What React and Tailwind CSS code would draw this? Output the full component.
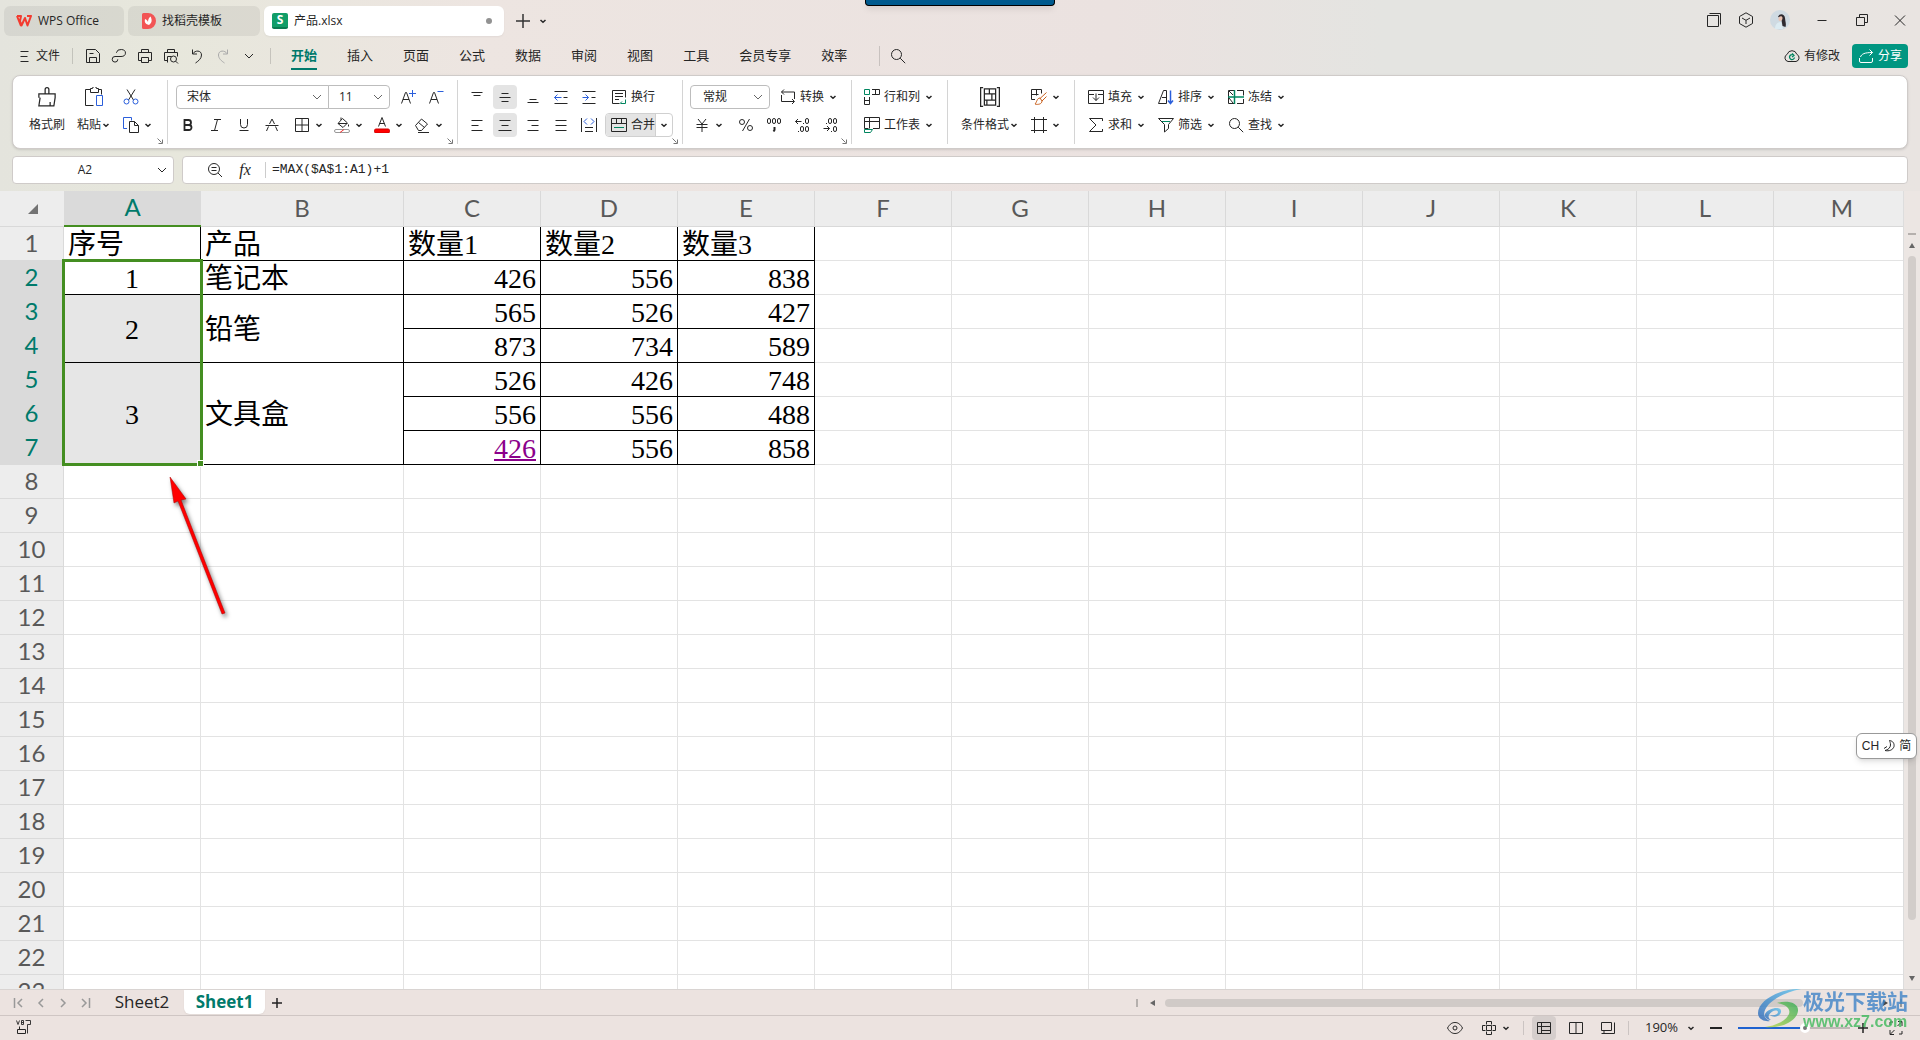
import React, { useState } from "react";

const BLUE = "#2b5fdb";
const GREEN = "#00855f";
const ORANGE = "#c8601e";

const columns = ["A", "B", "C", "D", "E", "F", "G", "H", "I", "J", "K", "L", "M"];

const menuTabs = ["开始", "插入", "页面", "公式", "数据", "审阅", "视图", "工具", "会员专享", "效率"];

// Each row only lists the cells that start in it, span = merged rows
const sheetRows = [
  [
    { col: "A", text: "序号" },
    { col: "B", text: "产品" },
    { col: "C", text: "数量1" },
    { col: "D", text: "数量2" },
    { col: "E", text: "数量3" },
  ],
  [
    { col: "A", text: "1", center: true },
    { col: "B", text: "笔记本" },
    { col: "C", text: "426", num: true },
    { col: "D", text: "556", num: true },
    { col: "E", text: "838", num: true },
  ],
  [
    { col: "A", text: "2", center: true, span: 2, shaded: true },
    { col: "B", text: "铅笔", span: 2 },
    { col: "C", text: "565", num: true },
    { col: "D", text: "526", num: true },
    { col: "E", text: "427", num: true },
  ],
  [
    { col: "C", text: "873", num: true },
    { col: "D", text: "734", num: true },
    { col: "E", text: "589", num: true },
  ],
  [
    { col: "A", text: "3", center: true, span: 3, shaded: true },
    { col: "B", text: "文具盒", span: 3 },
    { col: "C", text: "526", num: true },
    { col: "D", text: "426", num: true },
    { col: "E", text: "748", num: true },
  ],
  [
    { col: "C", text: "556", num: true },
    { col: "D", text: "556", num: true },
    { col: "E", text: "488", num: true },
  ],
  [
    { col: "C", text: "426", num: true, link: true },
    { col: "D", text: "556", num: true },
    { col: "E", text: "858", num: true },
  ],
];

const icons = {
  menu: <path d="M4.5 3.5h8M4.5 8.5h7M4.5 13.5h8" />,
  save: <path d="M1.5 1.5h9l4 4v9h-13zM4.5 14.5v-5h7v5M4.5 5.5h4" />,
  link: <path d="M5.5 5V4.5a4.5 3.5 0 1 1 4.500 4H4a2.800 2.800 0 1 0 2.800 2.800" />,
  print: <path d="M4.5 4.5v-3h7v3M4 12.5H1.5v-8h13v8H12M4.5 9.5h7v5h-7z" />,
  preview: (
    <>
      <path d="M4.5 4.5v-3h7v3M4 12.5H1.5v-8h13v4M4.5 14.5v-6h4" />
      <circle cx="10.5" cy="11" r="3" />
      <path d="M12.7 13.2l2.300 2.300" />
    </>
  ),
  undo: <path d="M3.5 1.5v4.5h4.5M3.8 5.8C6 2 12.5 2 12.5 7c0 3.500-3 6-6 8" />,
  redo: <path d="M12.5 1.5v4.5H8M12.2 5.8C10 2 3.5 2 3.5 7c0 3.500 3 6 6 8" />,
  search: (
    <>
      <circle cx="6.5" cy="6.5" r="5" />
      <path d="M10.2 10.2l5 5" />
    </>
  ),
  brush: <path d="M1.5 5.5h13M2.5 8.5l-1 6.500h12l1-6.500M10.5 15v-3M1.5 8.500v-3h5V2a1.500 1.500 0 0 1 3 0v3.500h5v3" />,
  cut: (
    <>
      <path d="M4 .5l6.500 10.500M12 .5L5.500 11" />
      <g stroke={BLUE}>
        <circle cx="3.5" cy="12.5" r="2.5" />
        <circle cx="12.5" cy="12.5" r="2.5" />
      </g>
    </>
  ),
  copy: (
    <>
      <path stroke={BLUE} d="M4 11.5H.5v-11h8v3" />
      <path d="M6.5 4.5h5l4 4v7h-9zM11.5 4.5v4h4" />
    </>
  ),
  border: <path d="M1.5 1.5h13v13h-13zM8 1.5v13M1.5 8h13" />,
  fill: (
    <>
      <path d="M8.5 1.5l5 4.500-4.500 4.500-5-4zM7 3V.5M4 6.5h9M14.5 7.5v2" />
      <rect x=".5" y="12.5" width="15" height="3" rx="1.5" stroke="#999" />
      <path stroke="#e33" d="M6 15.5l4-3" />
    </>
  ),
  fontColor: (
    <>
      <path d="M4.5 9.5L8 .5l3.500 9M5.5 6.5h5" />
      <rect x=".5" y="12" width="15" height="4" rx="1.5" fill="#f00" stroke="#c00" />
    </>
  ),
  eraser: <path d="M1.5 8.5l6-6.500 6 5-6 6.500h-3zM4.5 5.5l6 5M4 15.5h11" />,
  bold: <path strokeWidth="1.8" d="M4.5 3h4a2.500 2.500 0 0 1 0 5h-4zM4.5 8h4.500a2.500 2.500 0 0 1 0 5h-4.500z" />,
  italic: <path d="M6 2.5h7M3 13.5h7M9.5 2.5l-3 11" />,
  underline: <path d="M4.5 2v5.500a3.500 3.500 0 0 0 7 0V2M3.5 13.5h9" />,
  strike: <path d="M1.5 8.5h13M5.5 7L8 2l2.500 5M4.5 9.5L2.5 14M11.5 9.5l2 4.500" />,
  fontUp: (
    <>
      <path d="M1.5 14.5l4-11h1l4 11M3 10.5h6" />
      <path stroke={BLUE} d="M12.5 1v7M9 4.5h7" />
    </>
  ),
  fontDown: (
    <>
      <path d="M1.5 14.5l4-11h1l4 11M3 10.5h6" />
      <path stroke={BLUE} d="M9.5 2.5h6" />
    </>
  ),
  top: <path d="M2.5 3.5h11M4.5 6.5h7" />,
  middle: <path d="M4.5 4.5h7M2.5 8.5h11M4.5 12.5h7" />,
  bottom: <path d="M4.5 10.5h7M2.5 13.5h11" />,
  outdent: (
    <>
      <path d="M1.5 2.5h13M10.5 8.5h4M1.5 14.5h13" />
      <path stroke={BLUE} d="M1.5 8.5h7M4.5 5.5l-3 3 3 3" />
    </>
  ),
  indent: (
    <>
      <path d="M1.5 2.5h13M10.5 8.5h4M1.5 14.5h13" />
      <path stroke={BLUE} d="M1.5 8.5h6M4.5 5.5l3 3-3 3" />
    </>
  ),
  wrap: (
    <>
      <path d="M8.5 14.5h-7v-13h13v7M4 4.5h8M4 7.5h8M4 10.5h4" />
      <path stroke={GREEN} d="M14.5 10.5v4h-5M11 12.5l-2 2" />
    </>
  ),
  left: <path d="M2.5 3.5h11M2.5 8.5h7M2.5 13.5h11" />,
  center: <path d="M2.5 3.5h11M4.5 8.5h7M1.5 13.5h13" />,
  right: <path d="M2.5 3.5h11M6.5 8.5h7M2.5 13.5h11" />,
  justify: <path d="M2.5 3.5h11M2.5 8.5h11M2.5 13.5h11" />,
  distribute: (
    <>
      <path d="M.5 1v14M15.5 1v14M4 10.5h8M4 14.5h8" />
      <path stroke={BLUE} d="M6 1.5l-3 3 3 3M10 1.5l3 3-3 3" />
    </>
  ),
  merge: (
    <>
      <path d="M.5 1.5h15v13H.5zM.5 6.5h15M5.5 1.5v5M10.5 1.5v5" />
      <path stroke={GREEN} d="M3 10.5h10" />
    </>
  ),
  convert: <path d="M4 .5L1.5 3 4 5.500M1.500 3h13v7M12 10l2.500 2.500L12 15M14 12.5H1.500V6" />,
  yen: <path d="M4 2l4 5 4-5M2.5 7.5h11M2.5 10.5h11M8 7.5V15" />,
  percent: (
    <>
      <circle cx="4" cy="5" r="2.5" />
      <circle cx="12" cy="11" r="2.5" />
      <path d="M11.5 2l-7 12" />
    </>
  ),
  thousands: (
    <>
      <rect x="1.5" y="1.5" width="3" height="5" rx="1.5" />
      <rect x="6.5" y="1.5" width="3" height="5" rx="1.5" />
      <rect x="11.5" y="1.5" width="3" height="5" rx="1.5" />
      <path strokeWidth="2" d="M8.5 10v3l-1 1.500" />
    </>
  ),
  moreDecimals: (
    <>
      <path d="M1.5 4.5h6M4 2L1.5 4.5 4 7M9 6.5h1" />
      <rect x="11.5" y="1.5" width="3" height="5" rx="1.5" />
      <rect x="6.5" y="9.5" width="3" height="5" rx="1.5" />
      <rect x="11.5" y="9.5" width="3" height="5" rx="1.5" />
      <path d="M4 14.5h1" />
    </>
  ),
  lessDecimals: (
    <>
      <path d="M1.5 11.5h6M5 9l2.500 2.500L5 14M9 14.5h1M4 6.5h1" />
      <rect x="6.5" y="1.5" width="3" height="5" rx="1.5" />
      <rect x="11.5" y="1.5" width="3" height="5" rx="1.5" />
      <rect x="11.5" y="9.5" width="3" height="5" rx="1.5" />
    </>
  ),
  rowsCols: (
    <>
      <path stroke={GREEN} d="M.5.5h5v5h-5z" />
      <path d="M8 .5h7.500v5H8M11.5.5v5M.5 8v7.500h5V8M.5 11.5h5" />
    </>
  ),
  worksheet: (
    <>
      <path d="M9 11.5h6.500V.5H.5v11h4M.5 4.5h15M5.5.5v11" />
      <path stroke={GREEN} d="M.5 12.5h8l-2 3h-6z" />
    </>
  ),
  condFormat: <path d="M2.500.5h-2v15h2M13.5.5h2v15h-2M3.500 1.500h9v13h-9zM3.500 5.500h9M3.500 10.500h9M7.500 1.500v4M9.500 5.500v5M5.500 10.500v4" />,
  tableStyle: (
    <>
      <path d="M4 10.5H.5V.5h10v4M.5 5.5h7M5.5.5v6" />
      <path stroke={ORANGE} d="M15.5 3.5L9 9.5M15.5 7.5L11 12M9 9c-3 0-3 4-5 6 3 1 7 0 7-3z" />
    </>
  ),
  cells: <path d="M3.5 0v16M12.5 0v16M0 2.5h16M0 13.5h16" />,
  fillDown: <path d="M6 5.5H.5v-4h15v4H10M.5 5.5v9h15v-9M8 4.5v7M5 8.5l3 3 3-3" />,
  sort: (
    <>
      <path d="M.5 14.5h8v-13h-3zM4 8.5h4" />
      <path stroke={BLUE} strokeWidth="1.5" d="M12.5 1.5v13M10 11.5l2.500 3 2.500-3" />
    </>
  ),
  freeze: (
    <>
      <path d="M6 1.5H.5v13H6M9 1.5h6.500v5M15.5 10v4.500H9M1 2l4 4M1 9l4 5" />
      <path stroke={GREEN} strokeWidth="1.5" d="M6.5 1v14M0 8h16" />
    </>
  ),
  sum: <path d="M14.5 4V1.5h-13L8 8l-6.500 6.500h13V12" />,
  filter: (
    <>
      <path d="M.5 1.5h15l-5 6v4l-4 3.500V7.500z" />
      <path stroke={GREEN} d="M4 4.5h8" />
    </>
  ),
  zoomOut: (
    <>
      <circle cx="7" cy="7" r="5.5" />
      <path d="M4.5 5.5h5M4.5 8.5h5M11 11l4 4" />
    </>
  ),
  windows: <path d="M1.5 3.5h11v11h-11zM3.5 1.5h11v11" />,
  cube: <path d="M8 .8l6.500 3.700v7L8 15.200l-6.500-3.700v-7zM4 6l4 2.300L12 6M8 8.300V12" />,
  minimize: <path d="M3.5 8.5h9" />,
  restore: <path d="M2.5 5.5h8v8h-8zM5.5 5.5v-3h8v8h-3" />,
  close: <path d="M3 3.5l10 10M13 3.5l-10 10" />,
  cloud: (
    <>
      <path d="M4 13.5a3.800 3.800 0 0 1-.8-7.200 5 5 0 0 1 9.600 0 3.800 3.800 0 0 1-.8 7.200z" />
      <path stroke={GREEN} strokeWidth="1.3" d="M10 7.5a2.500 2.500 0 1 0 .5 2M8 5.500l2 2-2 1.500" />
    </>
  ),
  share: <path d="M1.5 10v3a1.500 1.500 0 0 0 1.500 1.500h10a1.500 1.500 0 0 0 1.500-1.500v-3M2.5 9c1-3 4-4.500 12-4.500M11.5 1.5l3 3-3 3" />,
  macro: (
    <>
      <path strokeWidth=".9" d="M.5.5l1.500 4 1.500-4M5.5.5v4h2v-4zM5.5 2.500h2M9.500.5h5v4h-3v9" />
      <path d="M3.5 6.5v3M1.5 9.5h8v4h-8z" />
    </>
  ),
  eye: (
    <>
      <path d="M.5 8C3 3.5 5.5 2.500 8 2.500S13 3.500 15.500 8C13 12.500 10.500 13.500 8 13.500S3 12.500.5 8z" />
      <circle cx="8" cy="8" r="2" />
    </>
  ),
  crosshair: <path d="M5.500 4.500v-3h5v3M5.500 11.500v3h5v-3M4.500 5.500h-3v5h3M11.500 5.500h3v5h-3M5.500 5.500h5v5h-5z" />,
  normalView: <path d="M1.5 2.5h13v11h-13zM1.5 6.500h13M5.500 2.500v11M5.500 10.500h9" />,
  pageView: <path d="M1.5 2.5h13v11h-13zM8 2.5v11" />,
  readView: <path d="M1.5 2.5h10v8h-10zM1.5 13.5h13v-11M4 10.5v3" />,
  full: <path d="M2 10v4.500h4M14 6V1.500h-4M2.5 14l4-4M13.5 2l-4 4M2 5V2h3M14 11v3h-3" />,
};

function Icon({ name, className = "size-4" }) {
  return (
    <svg viewBox="0 0 16 16" fill="none" stroke="currentColor" className={`shrink-0 ${className}`} aria-hidden="true">
      {icons[name]}
    </svg>
  );
}

function Chevron({ thin }) {
  return (
    <svg viewBox="0 0 10 10" fill="none" stroke="currentColor" strokeWidth={thin ? 1 : 1.5} className="size-2.5 shrink-0" aria-hidden="true">
      {thin ? <path d="M1 3l4 4 4-4" /> : <path d="M2.5 4L5 6.3 7.5 4" />}
    </svg>
  );
}

function IconButton({ name, label, active, className = "w-6" }) {
  return (
    <button
      type="button"
      aria-label={label}
      className={`flex h-6 shrink-0 items-center justify-center rounded ${className} ${active ? "bg-[#e4e4e4]" : ""}`}
    >
      <Icon name={name} />
    </button>
  );
}

// Small icon (with optional caption) followed by a drop-down arrow
function Combo({ name, label, text }) {
  return (
    <button type="button" aria-label={label || text} className="flex h-6 shrink-0 items-center gap-1 whitespace-nowrap">
      <Icon name={name} />
      {text && <span>{text}</span>}
      <Chevron />
    </button>
  );
}

function Picker({ label, options, className, textClass = "pl-2.5" }) {
  return (
    <div className={`relative flex h-6 shrink-0 items-center border border-[#bdbdbd] bg-white ${className}`}>
      <select aria-label={label} className={`h-full w-full appearance-none bg-transparent outline-none ${textClass}`}>
        {options.map((o) => (
          <option key={o}>{o}</option>
        ))}
      </select>
      <span className="pointer-events-none absolute right-1.5 text-[#666]">
        <Chevron thin />
      </span>
    </div>
  );
}

function Group({ className, launcher, last, children }) {
  return (
    <div className={`relative my-1 flex shrink-0 pt-[5px] ${last ? "" : "border-r border-[#d4d4d4]"} ${className}`}>
      {children}
      {launcher && (
        <svg viewBox="0 0 6 6" fill="none" stroke="#777" className="absolute right-1 bottom-0 size-1.5" aria-hidden="true">
          <path d="M.5.5l4 4M1.5 5.5h4v-4" />
        </svg>
      )}
    </div>
  );
}

function TitleBar() {
  return (
    <header className="flex h-10 shrink-0 items-start gap-1 pt-1.5 pl-1">
      <button type="button" className="flex h-[30px] w-[120px] items-center gap-1.5 rounded-md bg-black/6 pl-3">
        <svg viewBox="0 0 16 12" fill="none" stroke="#f33b2f" strokeWidth="2" strokeLinejoin="round" className="h-3 w-4">
          <path d="M1 1h4L4 6l1.500 4.500L9 3l2.500 7.500L15 1h-4M1 1l4 10" />
        </svg>
        WPS Office
      </button>
      <button type="button" className="flex h-[30px] w-[132px] items-center gap-1.5 rounded-md bg-black/6 pl-3.5">
        <svg viewBox="0 0 14 16" className="h-4 w-3.5">
          <path fill="#f25555" d="M0 1.5A1.500 1.500 0 0 1 1.500 0H6a8 8 0 0 1 0 16H1.500A1.500 1.500 0 0 1 0 14.500z" />
          <path fill="#fff" d="M7 12C2.500 11 2.500 8.500 3 6c1.500.5 2.500 1.500 3 3 0-2.500 1-4.500 2.500-5.500 1.500 3 2 6-1.500 8.500z" />
        </svg>
        找稻壳模板
      </button>
      <button type="button" className="flex h-[30px] w-60 items-center gap-1.5 rounded-md bg-white pr-3 pl-2 shadow-xs">
        <span className="flex size-4 items-center justify-center rounded-xs border-b-2 border-[#0b7a50] bg-[#119d68] text-xs leading-3 font-bold text-white">
          S
        </span>
        产品.xlsx
        <span className="ml-auto size-1.5 rounded-full bg-[#929292]" />
      </button>
      <button type="button" aria-label="新建" className="ml-2 flex h-[30px] items-center">
        <svg viewBox="0 0 14 14" stroke="#333" strokeWidth="1.5" className="size-3.5">
          <path d="M7 0v14M0 7h14" />
        </svg>
      </button>
      <button type="button" aria-label="标签列表" className="ml-1 flex h-[30px] items-center">
        <Chevron />
      </button>
      <div className="mr-0.5 ml-auto flex h-7 items-center">
        <IconButton name="windows" label="窗口" className="w-8" />
        <IconButton name="cube" label="应用" className="w-8" />
        <button type="button" aria-label="账号" className="flex w-9 justify-center">
          <svg viewBox="0 0 20 20" className="size-5">
            <circle cx="10" cy="10" r="10" fill="#cfdae2" />
            <path fill="#2e2a30" d="M8 6.500c2-3.500 6.500-2.500 7 1.500.3 4 1.500 6 .5 9l-3-1-1-6z" />
            <path fill="#e9c4b4" d="M9 7c1.500-1.500 3.500-1 3.500 1s-1 3-2.500 3S8 9 9 7z" />
            <path fill="#dcebf2" d="M5 19c0-5 3-7 6-7l2 7z" />
          </svg>
        </button>
        <IconButton name="minimize" label="最小化" className="ml-1 w-10" />
        <IconButton name="restore" label="还原" className="w-10" />
        <IconButton name="close" label="关闭" className="w-9" />
      </div>
    </header>
  );
}

function MenuBar() {
  const [active, setActive] = useState("开始");
  const quick = [
    ["save", "保存"],
    ["link", "输出"],
    ["print", "打印"],
    ["preview", "打印预览"],
    ["undo", "撤销"],
  ];

  return (
    <nav className="flex h-[31px] shrink-0 items-center pr-3">
      <button type="button" className="flex items-center gap-1 pl-4">
        <Icon name="menu" />
        文件
      </button>
      <span className="mr-[7px] ml-3 h-4 w-px bg-black/15" />
      {quick.map(([name, label]) => (
        <IconButton key={name} name={name} label={label} className="w-[26px]" />
      ))}
      <IconButton name="redo" label="恢复" className="w-[26px] text-[#aaa]" />
      <button type="button" aria-label="更多" className="flex h-6 w-[26px] items-center justify-center">
        <Chevron thin />
      </button>
      <span className="mr-5 ml-2 h-4 w-px bg-black/15" />
      <div className="flex gap-[30px] text-[13px]">
        {menuTabs.map((tab) => (
          <button
            type="button"
            key={tab}
            onClick={() => setActive(tab)}
            className={`h-7 border-b-2 leading-6 whitespace-nowrap ${
              active === tab ? "border-[#00796b] font-bold text-[#00796b]" : "border-transparent"
            }`}
          >
            {tab}
          </button>
        ))}
      </div>
      <span className="ml-8 h-5 w-px bg-black/15" />
      <IconButton name="search" label="搜索" className="ml-1.5 w-6" />
      <button type="button" className="ml-auto flex items-center gap-1 whitespace-nowrap">
        <Icon name="cloud" />
        有修改
      </button>
      <button type="button" className="ml-3 flex h-6 w-14 items-center justify-center gap-1 rounded bg-[#009681] whitespace-nowrap text-white">
        <Icon name="share" />
        分享
      </button>
    </nav>
  );
}

function Ribbon() {
  return (
    <section className="mx-3 mt-1 flex h-[74px] shrink-0 overflow-hidden rounded-lg border border-[#cfcbc9] bg-white shadow-sm">
      <Group className="w-[155px] gap-3 pl-4" launcher>
        <button type="button" className="flex flex-col items-center gap-1">
          <Icon name="brush" className="my-0.5 size-5" />
          <span className="leading-6">格式刷</span>
        </button>
        <button type="button" className="flex flex-col items-center gap-1">
          <svg viewBox="0 0 20 20" fill="none" stroke="currentColor" className="my-0.5 size-5" aria-hidden="true">
            <path d="M6.5 2.5h-5v16h8M14.5 2.5h3v5M6.5 1.5h2a2 2 0 0 1 4 0h2v4h-8z" />
            <path stroke={BLUE} d="M12.5 8.5h6v10h-6z" />
          </svg>
          <span className="flex items-center leading-6">
            粘贴
            <Chevron />
          </span>
        </button>
        <div className="flex flex-col gap-1">
          <button type="button" aria-label="剪切" className="flex h-6 items-center">
            <Icon name="cut" />
          </button>
          <Combo name="copy" label="复制" />
        </div>
      </Group>

      <Group className="w-[290px] flex-col gap-1 pl-1.5" launcher>
        <div className="flex items-center pl-0.5">
          <Picker label="字体" options={["宋体", "黑体"]} className="w-[153px] rounded-l" />
          <Picker label="字号" options={["11", "12", "14"]} className="-ml-px w-[62px] rounded-r" />
          <IconButton name="fontUp" label="增大字号" className="ml-1 w-7" />
          <IconButton name="fontDown" label="减小字号" className="w-7" />
        </div>
        <div className="flex items-center">
          <IconButton name="bold" label="加粗" className="w-7" />
          <IconButton name="italic" label="倾斜" className="w-7" />
          <IconButton name="underline" label="下划线" className="w-7" />
          <IconButton name="strike" label="删除线" className="w-7" />
          <div className="flex gap-2.5 pl-2">
            <Combo name="border" label="边框" />
            <Combo name="fill" label="填充颜色" />
            <Combo name="fontColor" label="字体颜色" />
            <Combo name="eraser" label="清除" />
          </div>
        </div>
      </Group>

      <Group className="w-[225px] flex-col gap-1 pl-[7px]" launcher>
        <div className="flex gap-1">
          <IconButton name="top" label="顶端对齐" />
          <IconButton name="middle" label="垂直居中" active />
          <IconButton name="bottom" label="底端对齐" />
          <IconButton name="outdent" label="减少缩进" />
          <IconButton name="indent" label="增加缩进" />
          <button type="button" className="flex h-6 items-center gap-1 pl-1.5 whitespace-nowrap">
            <Icon name="wrap" />
            换行
          </button>
        </div>
        <div className="flex gap-1">
          <IconButton name="left" label="左对齐" />
          <IconButton name="center" label="水平居中" active />
          <IconButton name="right" label="右对齐" />
          <IconButton name="justify" label="两端对齐" />
          <IconButton name="distribute" label="分散对齐" />
          <div className="flex h-6 rounded border border-[#d0d0d0]">
            <button type="button" className="flex items-center gap-1 rounded-l border-r border-[#d0d0d0] bg-[#e4e4e4] pl-[5px] whitespace-nowrap">
              <Icon name="merge" />
              合并
            </button>
            <button type="button" aria-label="合并选项" className="flex w-4 items-center justify-center">
              <Chevron />
            </button>
          </div>
        </div>
      </Group>

      <Group className="w-[169px] flex-col gap-1 pl-[7px]" launcher>
        <div className="flex gap-2.5">
          <Picker label="数字格式" options={["常规", "数值"]} className="w-20 rounded" textClass="pl-3" />
          <Combo name="convert" text="转换" />
        </div>
        <div className="flex items-center pl-1">
          <Combo name="yen" label="货币" />
          <IconButton name="percent" label="百分比" className="ml-2 w-7" />
          <IconButton name="thousands" label="千位分隔" className="w-7" />
          <IconButton name="moreDecimals" label="增加小数位" className="w-7" />
          <IconButton name="lessDecimals" label="减少小数位" className="w-7" />
        </div>
      </Group>

      <Group className="w-[96px] flex-col gap-1 pl-3">
        <Combo name="rowsCols" text="行和列" />
        <Combo name="worksheet" text="工作表" />
      </Group>

      <Group className="w-[127px] gap-3 pl-[13px]">
        <button type="button" className="flex flex-col items-center gap-1 whitespace-nowrap">
          <Icon name="condFormat" className="my-0.5 size-5" />
          <span className="flex items-center leading-6">
            条件格式
            <Chevron />
          </span>
        </button>
        <div className="flex flex-col gap-1">
          <Combo name="tableStyle" label="表格样式" />
          <Combo name="cells" label="单元格" />
        </div>
      </Group>

      <Group className="flex-col gap-1 pl-[13px]" last>
        <div className="flex gap-3">
          <Combo name="fillDown" text="填充" />
          <Combo name="sort" text="排序" />
          <Combo name="freeze" text="冻结" />
        </div>
        <div className="flex gap-3">
          <Combo name="sum" text="求和" />
          <Combo name="filter" text="筛选" />
          <Combo name="search" text="查找" />
        </div>
      </Group>
    </section>
  );
}

function FormulaBar() {
  return (
    <div className="mx-3 my-[7px] flex h-7 shrink-0 gap-2">
      <div className="flex w-[162px] shrink-0 items-center rounded border border-[#cfcbc9] bg-white pr-1.5">
        <input aria-label="名称框" defaultValue="A2" className="min-w-0 flex-1 text-center outline-none" />
        <Chevron thin />
      </div>
      <div className="flex flex-1 items-center rounded border border-[#cfcbc9] bg-white">
        <button type="button" aria-label="缩小" className="ml-5 flex w-6 justify-center">
          <Icon name="zoomOut" />
        </button>
        <button type="button" className="ml-2 w-5 font-['Liberation_Serif',serif] text-base leading-6 italic">
          fx
        </button>
        <span className="mr-1.5 ml-2.5 h-4 w-px bg-[#ccc]" />
        <input
          aria-label="公式"
          defaultValue="=MAX($A$1:A1)+1"
          className="flex-1 font-['Liberation_Mono',monospace] text-[13px] outline-none"
        />
      </div>
    </div>
  );
}

function DataCell({ cell }) {
  const align = cell.center ? "text-center" : cell.num ? "text-right" : "text-left";
  return (
    <td
      rowSpan={cell.span}
      className={`border-r border-b border-black px-1 pt-0.5 pb-0 leading-7 ${align} ${cell.shaded ? "bg-[#e6e6e6]" : ""}`}
    >
      {cell.link ? (
        <a href="#C7" className="text-[#8b008b] underline decoration-2">
          {cell.text}
        </a>
      ) : (
        cell.text
      )}
    </td>
  );
}

function Grid() {
  const rowNumbers = Array.from({ length: 23 }, (_, i) => i + 1);

  return (
    <div className="relative min-w-0 flex-1 overflow-hidden bg-white">
      <table className="w-[1911px] table-fixed border-separate border-spacing-0 font-['Liberation_Serif','Noto_Sans_CJK_SC',serif] text-[28px] text-black">
        <colgroup>
          <col className="w-16" />
          {columns.map((c) => (
            <col key={c} className={c === "B" ? "w-[203px]" : "w-[137px]"} />
          ))}
        </colgroup>
        <thead className="font-['Lato',sans-serif] text-2xl text-[#595959]">
          <tr className="h-9">
            <th className="border-b border-[#d9d9d9] bg-[#ededed] p-0">
              <svg viewBox="0 0 10 10" className="ml-7 size-2.5" aria-hidden="true">
                <path fill="#737373" d="M10 0v10H0z" />
              </svg>
            </th>
            {columns.map((c) => (
              <th
                key={c}
                scope="col"
                className={`px-0 pt-0 pb-0.5 leading-7 font-normal ${
                  c === "A"
                    ? "border-b-2 border-[#448e21] bg-[#dadada] text-[#007a6b]"
                    : "border-r border-b border-[#d9d9d9] bg-[#ededed]"
                }`}
              >
                {c}
              </th>
            ))}
          </tr>
        </thead>
        <tbody>
          {rowNumbers.map((n) => {
            const cells = sheetRows[n - 1];
            const selected = n > 1 && n < 8;
            const blanks = cells ? columns.slice(5) : columns;
            return (
              <tr key={n} className="h-[34px]">
                <th
                  scope="row"
                  className={`border-r border-b border-[#dadada] px-0 pt-0 pb-0.5 font-['Lato',sans-serif] text-2xl leading-7 font-normal ${
                    selected ? "bg-[#dadada] text-[#007a6b]" : "bg-[#ededed] text-[#595959]"
                  }`}
                >
                  {n}
                </th>
                {cells && cells.map((cell) => <DataCell key={cell.col} cell={cell} />)}
                {blanks.map((c) => (
                  <td key={c} className="border-r border-b border-[#e3e3e3] p-0" />
                ))}
              </tr>
            );
          })}
        </tbody>
      </table>

      {/* Selection frame with its fill handle */}
      <div className="pointer-events-none absolute top-[68px] left-[62px] h-[207px] w-[141px] border-3 border-[#448e21]">
        <span className="absolute -right-1 -bottom-1 size-[7px] border border-white bg-[#448e21]" />
      </div>

      <svg viewBox="0 0 70 150" className="pointer-events-none absolute top-[280px] left-[164px] h-[150px] w-[70px] drop-shadow-[2px_3px_2px_rgba(0,0,0,0.5)]" aria-hidden="true">
        <path fill="#f00" stroke="#a00" strokeWidth=".5" d="M6 6l16 22-5 1 44 113-3 1L14 30l-4 2z" />
      </svg>
    </div>
  );
}

function VerticalScroll() {
  return (
    <div className="flex w-[17px] shrink-0 flex-col items-center border-l border-[#ddd] bg-[#ece6e3] pt-[42px]">
      <span className="h-0.5 w-2 bg-[#b5b0ad]" />
      <svg viewBox="0 0 6 5" className="mt-2 h-[5px] w-1.5" aria-hidden="true">
        <path fill="#666" d="M3 0l3 5H0z" />
      </svg>
      <span className="mt-2 min-h-0 w-2 flex-1 rounded-full bg-[#d2cdca]" />
      <svg viewBox="0 0 6 5" className="mt-14 mb-2 h-[5px] w-1.5" aria-hidden="true">
        <path fill="#666" d="M3 5l3-5H0z" />
      </svg>
    </div>
  );
}

function SheetTabs() {
  const nav = [
    ["第一个", "M2.5 2v10M10 3L6 7l4 4"],
    ["上一个", "M9 3L5 7l4 4"],
    ["下一个", "M5 3l4 4-4 4"],
    ["最后一个", "M4 3l4 4-4 4M11.5 2v10"],
  ];

  return (
    <div className="flex h-[26px] shrink-0 items-start border-b border-[#cfc6c4]">
      <div className="flex h-[25px] items-center gap-2 pl-3 text-[#999]">
        {nav.map(([label, d]) => (
          <button type="button" key={label} aria-label={label}>
            <svg viewBox="0 0 14 14" fill="none" stroke="currentColor" strokeWidth="1.5" className="size-3.5">
              <path d={d} />
            </svg>
          </button>
        ))}
      </div>
      <div className="flex pl-2 text-[17px] leading-6">
        <button type="button" className="h-6 w-[84px]">
          Sheet2
        </button>
        <button type="button" className="h-6 w-[81px] rounded-b-md bg-white font-bold text-[#007a6b] shadow-xs">
          Sheet1
        </button>
        <button type="button" aria-label="新建工作表" className="flex h-[26px] w-6 items-center justify-center">
          <svg viewBox="0 0 10 10" stroke="#222" strokeWidth="1.5" className="size-2.5">
            <path d="M5 0v10M0 5h10" />
          </svg>
        </button>
      </div>
      <div className="ml-auto flex h-[25px] w-[784px] items-center">
        <span className="h-2 w-0.5 bg-[#b5b0ad]" />
        <svg viewBox="0 0 5 6" className="ml-3 h-1.5 w-[5px]" aria-hidden="true">
          <path fill="#666" d="M0 3l5-3v6z" />
        </svg>
        <span className="ml-2.5 h-2 flex-1 rounded-full bg-[#d0cac7]" />
        <svg viewBox="0 0 5 6" className="ml-20 h-1.5 w-[5px]" aria-hidden="true">
          <path fill="#444" d="M5 3L0 0v6z" />
        </svg>
        <span className="mr-4.5 ml-3 h-2 w-0.5 bg-[#999]" />
      </div>
    </div>
  );
}

function StatusBar() {
  const [zoom, setZoom] = useState(61);

  return (
    <footer className="flex h-6 shrink-0 items-center pr-4 pl-4">
      <button type="button" aria-label="宏">
        <Icon name="macro" />
      </button>
      <button type="button" aria-label="护眼模式" className="ml-auto">
        <Icon name="eye" />
      </button>
      <div className="ml-4.5 flex">
        <Combo name="crosshair" label="阅读模式" />
      </div>
      <span className="ml-3 h-3.5 w-px bg-[#cbc4c2]" />
      <div className="ml-2 flex gap-2">
        <IconButton name="normalView" label="普通视图" className="w-6 bg-[#d5cecc]" />
        <IconButton name="pageView" label="分页预览" />
        <IconButton name="readView" label="页面布局" />
      </div>
      <span className="ml-2 h-3.5 w-px bg-[#cbc4c2]" />
      <button type="button" className="ml-4 flex items-center gap-2 text-[13px]">
        190%
        <Chevron />
      </button>
      <button type="button" aria-label="缩小显示" className="ml-3.5 h-0.5 w-3 bg-[#222]" />
      <input
        type="range"
        aria-label="显示比例"
        value={zoom}
        onChange={(e) => setZoom(Number(e.target.value))}
        className="ml-4 h-0.5 w-28 appearance-none bg-[linear-gradient(90deg,#1f62d0_60%,#bdb7b5_60%)] [&::-webkit-slider-thumb]:size-2.5 [&::-webkit-slider-thumb]:appearance-none [&::-webkit-slider-thumb]:rounded-full [&::-webkit-slider-thumb]:border-3 [&::-webkit-slider-thumb]:border-white [&::-webkit-slider-thumb]:bg-[#777]"
      />
      <button type="button" aria-label="放大显示" className="ml-2 flex">
        <svg viewBox="0 0 10 10" stroke="#222" strokeWidth="1.5" className="size-2.5">
          <path d="M5 0v10M0 5h10" />
        </svg>
      </button>
      <button type="button" aria-label="全屏" className="ml-5">
        <Icon name="full" />
      </button>
    </footer>
  );
}

function Watermark() {
  return (
    <div className="pointer-events-none absolute right-3 bottom-2 flex opacity-80">
      <svg viewBox="0 0 46 42" className="h-[42px] w-[46px]" aria-hidden="true">
        <defs>
          <linearGradient id="swirlBlue" x1="1" y1="0" x2="0" y2="1">
            <stop offset="0" stopColor="#5cc4ee" />
            <stop offset="1" stopColor="#2a66b8" />
          </linearGradient>
          <linearGradient id="swirlGreen" x1="1" y1="0" x2="0" y2="1">
            <stop offset="0" stopColor="#2faa55" />
            <stop offset="1" stopColor="#b9d84c" />
          </linearGradient>
        </defs>
        <path fill="url(#swirlBlue)" d="M44 1C24 0 1 12 1 25c0 6 6 9 12 8C6 30 5 24 12 16 19 9 30 4 44 1z" />
        <path fill="url(#swirlBlue)" d="M8 26c3-6 17-9 16-2-1 5-8 6-11 3 5 1 8-1 8-3-1-3-7-1-9 3-1 2 0 4 2 5-4 0-7-3-6-6z" />
        <path fill="url(#swirlGreen)" d="M20 15c9-3 22-1 21 8-1 10-17 18-33 16 10-1 21-6 24-13 2-6-4-10-12-11z" />
      </svg>
      <div>
        <div className="font-['Noto_Sans_CJK_SC',sans-serif] text-[21px] leading-6 font-bold text-[#3f84c8]">极光下载站</div>
        <div className="font-['Liberation_Sans',sans-serif] text-base leading-5 font-bold text-[#3fb95c]">www.xz7.com</div>
      </div>
    </div>
  );
}

function App() {
  return (
    <div className="relative flex h-screen flex-col overflow-hidden bg-[linear-gradient(90deg,#e4e4dd_0%,#e7e7dc_9%,#ede5e1_25%,#ebe2e0_58%,#e4e4e1_72%,#e4e4e1_80%,#e9e4e1_100%)] font-['Open_Sans','Noto_Sans_CJK_SC',sans-serif] text-xs text-[#262626]">
      <TitleBar />
      <MenuBar />
      <Ribbon />
      <FormulaBar />
      <main className="flex min-h-0 flex-1 border-b border-[#d9d4d2]">
        <Grid />
        <VerticalScroll />
      </main>
      <div className="bg-[#ece3e0]">
        <SheetTabs />
        <StatusBar />
      </div>

      {/* Screen recorder tab that hangs from the top edge */}
      <div className="absolute top-0 left-[865px] h-1.5 w-[190px] rounded-b border border-t-0 border-black bg-[#005a8e] shadow-md" />

      <div className="absolute top-[733px] right-[3px] flex h-[26px] w-[61px] items-center justify-center gap-1 rounded-md border border-[#999] bg-white font-['Liberation_Sans','Noto_Sans_CJK_SC',sans-serif] text-xs shadow-md">
        CH
        <svg viewBox="0 0 12 12" fill="none" stroke="currentColor" className="size-3" aria-hidden="true">
          <path d="M6.5.5C10 1 11.5 3.5 11 6.5 10 10 6 11.5 2 10.5c3-.5 5.500-3 5.500-5.500 0-2-.5-3-1-4.500zM1 8.500l3-2" />
        </svg>
        简
      </div>

      <Watermark />
    </div>
  );
}

export default App;
